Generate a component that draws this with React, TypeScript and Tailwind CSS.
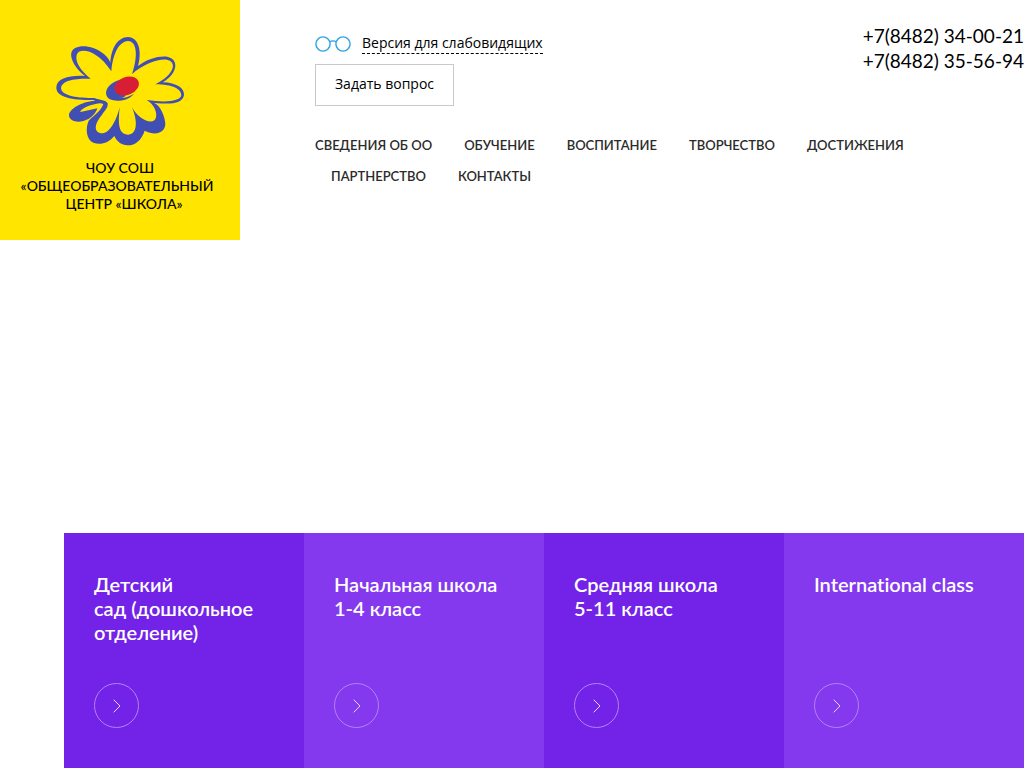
const menu = [
  'СВЕДЕНИЯ ОБ ОО',
  'ОБУЧЕНИЕ',
  'ВОСПИТАНИЕ',
  'ТВОРЧЕСТВО',
  'ДОСТИЖЕНИЯ',
  'ПАРТНЕРСТВО',
  'КОНТАКТЫ',
];

const phones = ['+7(8482) 34-00-21', '+7(8482) 35-56-94'];

const sections = [
  ['Детский', 'сад (дошкольное', 'отделение)'],
  ['Начальная школа', '1-4 класс'],
  ['Средняя школа', '5-11 класс'],
  ['International class'],
];

function Flower() {
  return (
    <svg viewBox="0 0 420 360" className="h-[120px] w-[140px]" aria-hidden="true">
      <path
        fill="#414fb5"
        d="M181 98C184 55 202 22 234 21C268 22 276 68 264 108C290 86 330 76 352 80C388 88 384 130 338 157C380 158 404 175 402 195C398 222 360 224 312 218C332 226 346 262 346 283C344 310 315 318 284 302C275 330 255 347 232 346C215 345 200 335 193 318C175 340 150 346 130 338C108 328 106 294 116 272C128 258 152 246 160 222L152 220C130 222 96 232 90 246C105 244 125 239 142 235C138 250 122 268 100 273C80 279 57 272 57 256C57 238 92 215 135 212L132 210C60 212 18 200 19 172C20 145 60 135 105 138C75 115 60 85 64 68C70 48 100 44 130 54C155 63 175 80 181 98Z"
      />
      <path
        fill="#ffe500"
        d="M184 124C188 75 205 35 234 33C262 34 264 80 246 133C275 104 325 86 350 89C380 94 378 130 316 163C370 163 394 178 394 196C390 215 345 218 290 210C312 222 322 247 318 262C312 288 268 272 246 232C262 270 264 312 235 314C205 314 204 280 209 232C200 270 180 308 158 310C128 308 134 280 156 254C164 243 175 232 173 220C168 209 150 211 133 204C80 205 35 197 33 175C35 150 75 145 122 146C90 120 75 95 80 75C85 52 140 56 184 124Z"
      />
      <path fill="#414fb5" d="M222 148C192 150 168 170 168 190C170 210 190 213 208 212C228 211 242 203 252 192C240 198 228 204 217 203C206 202 198 198 197 188Z" />
      <path fill="#414fb5" d="M196 180L228 197L216 204L196 200Z" />
      <ellipse cx="230" cy="168" rx="38" ry="27" transform="rotate(-22 230 168)" fill="#d71e35" />
    </svg>
  );
}

function Glasses() {
  return (
    <svg viewBox="0 0 36 16" className="h-4 w-9" fill="none" stroke="#2ba3e3" strokeWidth="1.4" aria-hidden="true">
      <circle cx="8" cy="8" r="7.1" />
      <circle cx="28" cy="8" r="7.1" />
      <path d="M14.8 6C16.5 4.6 19.5 4.6 21.2 6" />
    </svg>
  );
}

export default function App() {
  return (
    <div className="flex min-h-screen flex-col overflow-x-hidden bg-white font-['Lato','Noto_Sans',sans-serif] text-black">
      <header className="flex items-start">
        <a href="#" className="flex w-60 shrink-0 flex-col items-center bg-[#ffe500] pt-[30px] pb-[27px]">
          <Flower />
          <span className="mt-[9px] block text-center text-[14px] leading-[18px] font-medium whitespace-nowrap">
            <span className="block">ЧОУ СОШ</span>
            <span className="block pr-1.5">«ОБЩЕОБРАЗОВАТЕЛЬНЫЙ</span>
            <span className="block pl-2">ЦЕНТР «ШКОЛА»</span>
          </span>
        </a>
        <div className="min-w-0 flex-1 pl-[75px]">
          <div className="flex justify-between pt-[23px]">
            <div className="pt-[10px] font-['Open_Sans','Noto_Sans',sans-serif] text-[14px]">
              <a href="#" className="flex items-center gap-[11px]">
                <Glasses />
                <span className="border-b border-dashed border-black leading-[20px]">Версия для слабовидящих</span>
              </a>
              <button type="button" className="mt-[10px] h-[42px] w-[139px] border border-[#c9c9c9] pb-1">
                Задать вопрос
              </button>
            </div>
            <div className="text-right text-[19px] leading-[25px]">
              {phones.map((p) => (
                <a key={p} href={'tel:' + p} className="block">{p}</a>
              ))}
            </div>
          </div>
          <nav className="mt-6">
            <ul className="flex flex-wrap text-[13px] leading-[31px] font-semibold text-[#2b2b2b]">
              {menu.map((m) => (
                <li key={m} className="px-4 first:pl-0">
                  <a href="#">{m}</a>
                </li>
              ))}
            </ul>
          </nav>
        </div>
      </header>
      <main className="mt-auto ml-16 grid grid-cols-4">
        {sections.map((lines) => (
          <a key={lines[0]} href="#" className="bg-[#7322e8] px-[30px] pt-[39px] pb-10 text-white even:bg-[#8439ee]">
            <h2 className="min-h-[72px] text-[20px] leading-6 font-semibold whitespace-nowrap [font-variant-ligatures:none]">
              {lines.map((l) => (
                <span key={l} className="block">{l}</span>
              ))}
            </h2>
            <span className="mt-[39px] flex size-[45px] items-center justify-center rounded-full border border-[#b184f4]">
              <svg viewBox="0 0 8 14" className="h-3.5 w-2" fill="none" stroke="#e4d3fc" aria-hidden="true">
                <path d="M0.7 0.7L7 7L0.7 13.3" />
              </svg>
            </span>
          </a>
        ))}
      </main>
    </div>
  );
}
